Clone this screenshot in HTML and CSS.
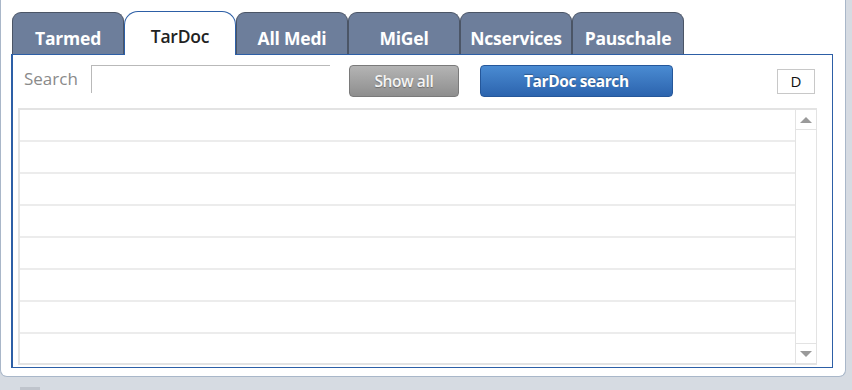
FILE: index.html
```html
<!DOCTYPE html>
<html lang="en">
<head>
    <meta charset="UTF-8">
    <title>Tariff search</title>
    <link rel="stylesheet" href="styles.css">
</head>
<body>
    <div class="window">
        <!-- Tab strip -->
        <div class="tabs">
            <div class="tab">Tarmed</div>
            <div class="tab active">TarDoc</div>
            <div class="tab">All Medi</div>
            <div class="tab">MiGel</div>
            <div class="tab">Ncservices</div>
            <div class="tab">Pauschale</div>
        </div>

        <div class="panel">
            <!-- Search bar -->
            <div class="toolbar">
                <label class="search-label" for="search">Search</label>
                <input type="text" id="search" class="search-input">
                <button class="btn btn-gray">Show all</button>
                <button class="btn btn-blue">TarDoc search</button>
                <div class="spacer"></div>
                <div class="lang-box">D</div>
            </div>

            <!-- Results list -->
            <div class="results">
                <div class="rows">
                    <div class="row"></div>
                    <div class="row"></div>
                    <div class="row"></div>
                    <div class="row"></div>
                    <div class="row"></div>
                    <div class="row"></div>
                    <div class="row"></div>
                    <div class="row last"></div>
                </div>
                <div class="scrollbar">
                    <div class="scroll-btn"><span class="arrow up"></span></div>
                    <div class="scroll-track"></div>
                    <div class="scroll-btn bottom"><span class="arrow down"></span></div>
                </div>
            </div>
        </div>
    </div>
    <div class="footer-bit"></div>
</body>
</html>
```

FILE: styles.css
```css
* {
    box-sizing: border-box;
    margin: 0;
    padding: 0;
}

body {
    font-family: 'Open Sans', 'DejaVu Sans', sans-serif;
    background-color: #d6dbe2;
    width: 852px;
    height: 390px;
    overflow: hidden;
}

.window {
    width: 846px;
    height: 377px;
    background-color: #fff;
    border: 1px solid #a9b7c9;
    border-top: none;
    border-radius: 0 0 7px 7px;
    padding: 11px 12px 0 10px;
}

/* Tabs */
.tabs {
    display: flex;
    height: 43px;
    padding-left: 1px;
}

.tab {
    width: 112px;
    height: 42px;
    margin-top: 1px;
    background-color: #6d7e9b;
    border: 1px solid #4b5566;
    border-bottom: none;
    border-radius: 9px 9px 0 0;
    color: #fff;
    font-size: 17.5px;
    font-weight: 700;
    text-align: center;
    padding-top: 13px;
    line-height: 24px;
    letter-spacing: -0.2px;
}

.tab.active {
    background-color: #fff;
    color: #222;
    font-weight: 600;
    border: 1px solid #2d5fa6;
    border-bottom: none;
    border-radius: 14px 14px 0 0;
    height: 44px;
    margin-top: 0;
    margin-bottom: -1px;
    padding-top: 12px;
    position: relative;
    z-index: 1;
}

.panel {
    border: 1px solid #2d5fa6;
    border-left-width: 2px;
    height: 314px;
    padding: 9px 17px 0 5px;
}

/* Toolbar */
.toolbar {
    display: flex;
    align-items: center;
    height: 33px;
    padding-left: 6px;
}

.search-label {
    color: #8a8a8a;
    font-size: 17px;
    margin-right: 13px;
    margin-top: -4px;
}

.search-input {
    width: 239px;
    height: 28px;
    border: none;
    border-top: 1px solid #b9b9b9;
    border-left: 1px solid #b9b9b9;
    margin-right: 19px;
    margin-top: -3px;
}

.btn {
    height: 32px;
    border-radius: 4px;
    font-family: 'Open Sans', 'DejaVu Sans', sans-serif;
    font-size: 15.5px;
    font-weight: 700;
    color: #fff;
    letter-spacing: -0.4px;
}

.btn-gray {
    width: 110px;
    margin-right: 21px;
    background: linear-gradient(#b4b4b4, #8e8e8e);
    border: 1px solid #7a7a7a;
    color: #f4f4f4;
    font-weight: 600;
    text-shadow: 0 1px 1px rgba(0, 0, 0, 0.3);
}

.btn-blue {
    width: 193px;
    background: linear-gradient(#4a8bd2, #2c64ae);
    border: 1px solid #25579a;
    text-shadow: 0 -1px 1px rgba(0, 0, 0, 0.3);
}

.spacer {
    flex: 1;
}

.lang-box {
    width: 38px;
    height: 25px;
    border: 1px solid #c8c8c8;
    font-size: 15px;
    text-align: center;
    line-height: 23px;
    color: #111;
    margin-top: 1px;
}

/* Results list */
.results {
    display: flex;
    margin-top: 11px;
    width: 799px;
    height: 257px;
    border: 2px solid #e3e3e3;
    border-right-width: 1px;
}

.rows {
    flex: 1;
}

.row {
    height: 32px;
    border-bottom: 2px solid #ececec;
}

.row.last {
    border-bottom: none;
}

.scrollbar {
    width: 21px;
    border-left: 1px solid #e3e3e3;
    display: flex;
    flex-direction: column;
}

.scroll-btn {
    height: 20px;
    border-bottom: 1px solid #e3e3e3;
    display: flex;
    align-items: center;
    justify-content: center;
}

.scroll-btn.bottom {
    border-bottom: none;
    border-top: 1px solid #e3e3e3;
}

.scroll-track {
    flex: 1;
}

.arrow {
    width: 0;
    height: 0;
    border-left: 6px solid transparent;
    border-right: 6px solid transparent;
}

.arrow.up {
    border-bottom: 6px solid #9a9a9a;
}

.arrow.down {
    border-top: 6px solid #9a9a9a;
}

.footer-bit {
    width: 20px;
    height: 3px;
    margin: 10px 0 0 20px;
    background-color: #bfc4cc;
}
```
